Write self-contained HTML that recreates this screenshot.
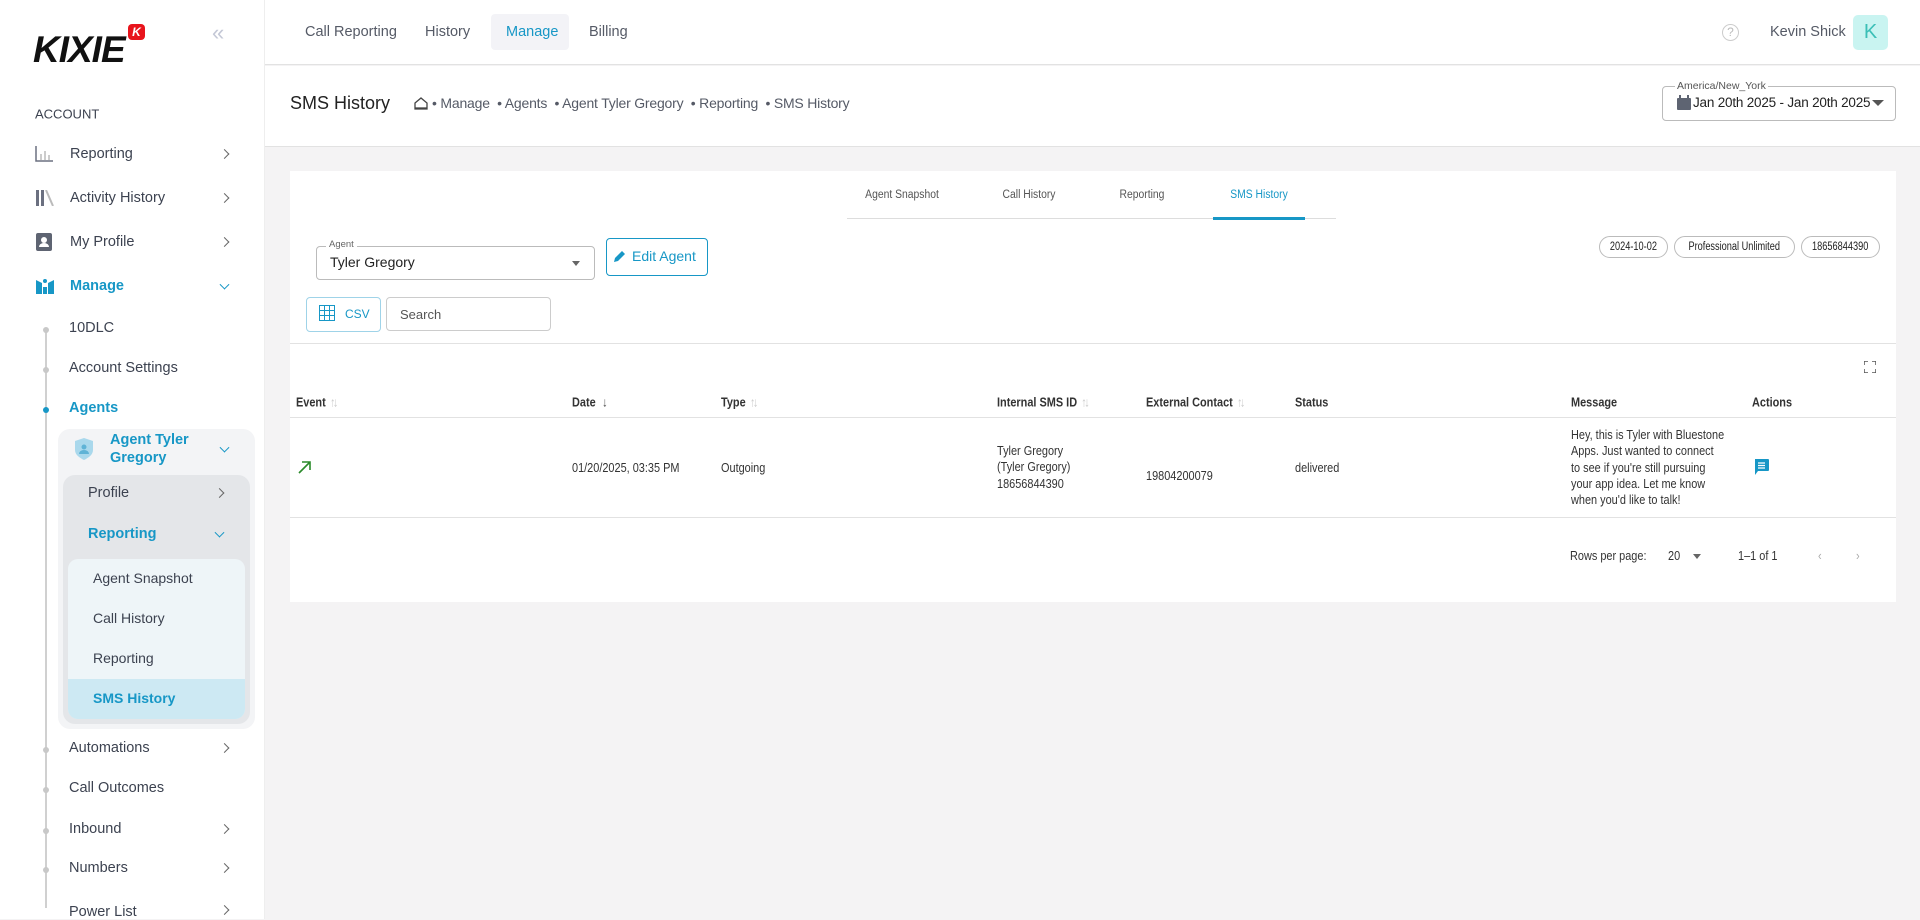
<!DOCTYPE html>
<html><head><meta charset="utf-8"><style>
*{box-sizing:border-box;margin:0;padding:0}
body{width:1920px;height:919px;overflow:hidden;background:#f4f3f4;font-family:"Liberation Sans",sans-serif;color:#3c4250;position:relative}
.a{position:absolute;white-space:nowrap}
.sb{position:absolute;left:0;top:0;width:265px;height:919px;background:#fff;border-right:1px solid #eee}
.si{position:absolute;font-size:14.5px;color:#3c4250;transform:translateY(-50%)}
.chev{position:absolute;left:221px;width:7px;height:7px;border-right:1.5px solid #666;border-bottom:1.5px solid #666;transform:translateY(-50%) rotate(-45deg)}
.chd{position:absolute;left:221px;width:7px;height:7px;border-right:1.5px solid #1797c6;border-bottom:1.5px solid #1797c6;transform:translateY(-70%) rotate(45deg)}
.dot{position:absolute;left:43px;width:6px;height:6px;border-radius:50%;background:#c8c8c8;transform:translateY(-50%)}
.blue{color:#1797c6;font-weight:bold}
.tn{position:absolute;top:32px;transform:translateY(-50%);font-size:14.5px;color:#555a66}
.th{position:absolute;top:402px;transform:translateY(-50%) scaleX(.84);transform-origin:left center;font-weight:bold;font-size:13px;color:#333}
.td{position:absolute;font-size:13px;color:#333;line-height:16.3px;transform:scaleX(.84);transform-origin:left top}
.sort{color:#ccc;font-weight:normal;margin-left:5px;letter-spacing:-3px}
.chip{position:absolute;top:236px;height:22px;border:1px solid #bbb;border-radius:11px;font-size:11.5px;line-height:20px;color:#222;text-align:center;overflow:hidden}
.chip span{display:inline-block;transform:scaleX(.8)}
.tab{position:absolute;top:195px;transform:translate(-50%,-50%) scaleX(.9);font-size:11.5px;color:#555}
</style></head><body>
<div class="sb">
 <div class="a" style="left:33px;top:29px;font-size:37px;font-weight:900;font-style:italic;color:#111;letter-spacing:-1px">KIXIE</div>
 <div class="a" style="left:128px;top:24px;width:17px;height:16px;background:#e8141c;border-radius:4px;color:#fff;font-size:12px;font-weight:bold;font-style:italic;text-align:center;line-height:16px">K</div>
 <div class="a" style="left:212px;top:20px;font-size:22px;color:#c4c8d6">«</div>
 <div class="si" style="left:35px;top:114px;font-size:13px">ACCOUNT</div>
 <svg class="a" style="left:35px;top:146px" width="18" height="16"><path d="M1 0V15H18" stroke="#6b7080" stroke-width="1.5" fill="none"/><rect x="5" y="8" width="2" height="6" fill="#ccc"/><rect x="9" y="5" width="2" height="9" fill="#ccc"/><rect x="13" y="9" width="2" height="5" fill="#ccc"/></svg>
 <div class="si" style="left:70px;top:154px">Reporting</div><div class="chev" style="top:154px"></div>
 <svg class="a" style="left:36px;top:190px" width="18" height="16"><rect x="0" y="0" width="3" height="16" fill="#6b7080"/><rect x="5" y="0" width="3" height="16" fill="#6b7080"/><path d="M10 0L17 16" stroke="#bbb" stroke-width="2"/></svg>
 <div class="si" style="left:70px;top:198px">Activity History</div><div class="chev" style="top:198px"></div>
 <svg class="a" style="left:36px;top:233px" width="18" height="18"><rect x="0" y="0" width="16" height="18" rx="2" fill="#5e6472"/><circle cx="8" cy="7" r="3" fill="#fff"/><path d="M3 14a5 4 0 0 1 10 0z" fill="#fff"/></svg>
 <div class="si" style="left:70px;top:242px">My Profile</div><div class="chev" style="top:242px"></div>
 <svg class="a" style="left:36px;top:278px" width="18" height="16"><path d="M0 2L6 5V16H0z M18 2L12 5V16H18z" fill="#1797c6"/><circle cx="9" cy="3" r="2" fill="#1797c6"/><rect x="7" y="9" width="4" height="7" fill="#1797c6"/></svg>
 <div class="si blue" style="left:70px;top:286px">Manage</div><div class="chd" style="top:286px"></div>
 <div class="a" style="left:45px;top:328px;width:1.5px;height:580px;background:#d0d0d0"></div>
 <div class="dot" style="top:330px"></div><div class="si" style="left:69px;top:328px">10DLC</div>
 <div class="dot" style="top:370px"></div><div class="si" style="left:69px;top:368px">Account Settings</div>
 <div class="dot" style="top:410px;background:#1797c6"></div><div class="si blue" style="left:69px;top:408px">Agents</div>
 <div class="a" style="left:58px;top:429px;width:197px;height:300px;background:#f3f4f6;border-radius:12px"></div>
 <svg class="a" style="left:75px;top:438px" width="18" height="22"><path d="M9 0L18 3V12C18 17 13 20 9 22C5 20 0 17 0 12V3z" fill="#a9d8ec"/><circle cx="9" cy="9" r="2.5" fill="#5fb3d6"/><path d="M4 16a5 4 0 0 1 10 0z" fill="#5fb3d6"/></svg>
 <div class="si blue" style="left:110px;top:440px">Agent Tyler</div>
 <div class="si blue" style="left:110px;top:458px">Gregory</div><div class="chd" style="top:449px"></div>
 <div class="a" style="left:63px;top:475px;width:187px;height:249px;background:#e4e6e9;border-radius:12px"></div>
 <div class="si" style="left:88px;top:493px">Profile</div><div class="chev" style="top:493px;left:216px"></div>
 <div class="si blue" style="left:88px;top:534px">Reporting</div><div class="chd" style="top:534px;left:216px"></div>
 <div class="a" style="left:68px;top:559px;width:177px;height:160px;background:#eef5f8;border-radius:10px;overflow:hidden"><div style="position:absolute;left:0;top:120px;width:177px;height:40px;background:#cde9f3"></div></div>
 <div class="si" style="left:93px;top:578px;font-size:14px">Agent Snapshot</div>
 <div class="si" style="left:93px;top:618px;font-size:14px">Call History</div>
 <div class="si" style="left:93px;top:658px;font-size:14px">Reporting</div>
 <div class="si blue" style="left:93px;top:698px;font-size:14px">SMS History</div>
 <div class="dot" style="top:750px"></div><div class="si" style="left:69px;top:748px">Automations</div><div class="chev" style="top:748px"></div>
 <div class="dot" style="top:790px"></div><div class="si" style="left:69px;top:788px">Call Outcomes</div>
 <div class="dot" style="top:831px"></div><div class="si" style="left:69px;top:829px">Inbound</div><div class="chev" style="top:829px"></div>
 <div class="dot" style="top:870px"></div><div class="si" style="left:69px;top:868px">Numbers</div><div class="chev" style="top:868px"></div>
 <div class="si" style="left:69px;top:912px">Power List</div><div class="chev" style="top:910px"></div>
</div>
<div class="a" style="left:265px;top:0;width:1655px;height:65px;background:#fff;border-bottom:1px solid #e2e2e2"></div>
<div class="a" style="left:491px;top:14px;width:78px;height:36px;background:#f3f3f7;border-radius:4px"></div>
<div class="tn" style="left:305px">Call Reporting</div>
<div class="tn" style="left:425px">History</div>
<div class="tn" style="left:506px;color:#1797c6">Manage</div>
<div class="tn" style="left:589px">Billing</div>
<div class="a" style="left:1722px;top:24px;width:17px;height:17px;border:1.5px solid #ccc;border-radius:50%;font-size:12px;color:#bbb;text-align:center;line-height:14px">?</div>
<div class="tn" style="left:1770px;color:#555a66">Kevin Shick</div>
<div class="a" style="left:1853px;top:15px;width:35px;height:35px;background:#c9f4f1;border-radius:5px;color:#3bbfb7;font-size:20px;text-align:center;line-height:35px">K</div>
<div class="a" style="left:265px;top:66px;width:1655px;height:81px;background:#fff;border-bottom:1px solid #e2e2e2"></div>
<div class="a" style="left:290px;top:93px;font-size:18px;color:#222">SMS History</div>
<svg class="a" style="left:414px;top:97px" width="14" height="13"><path d="M1 6L7 1L13 6V12H1z" stroke="#444" stroke-width="1.3" fill="none"/><path d="M1 11H13" stroke="#444" stroke-width="1.3"/></svg>
<div class="a" style="left:432px;top:95px;font-size:14px;color:#555a66;letter-spacing:-0.2px">• Manage &nbsp;• Agents &nbsp;• Agent Tyler Gregory &nbsp;• Reporting &nbsp;• SMS History</div>
<div class="a" style="left:1662px;top:86px;width:234px;height:35px;border:1px solid #bbb;border-radius:4px;background:#fff"></div>
<div class="a" style="left:1675px;top:80px;font-size:10.5px;color:#555;background:#fff;padding:0 2px">America/New_York</div>
<svg class="a" style="left:1677px;top:95px" width="14" height="15"><rect x="0" y="3" width="14" height="12" rx="1" fill="#5e6472"/><rect x="2" y="0" width="2" height="4" fill="#5e6472"/><rect x="10" y="0" width="2" height="4" fill="#5e6472"/></svg>
<div class="a" style="left:1693px;top:95px;font-size:13.5px;color:#222;letter-spacing:-0.2px">Jan 20th 2025 - Jan 20th 2025</div>
<div class="a" style="left:1872px;top:100px;border-left:6px solid transparent;border-right:6px solid transparent;border-top:6px solid #555"></div>
<div class="a" style="left:290px;top:171px;width:1606px;height:431px;background:#fff"></div>
<div class="tab" style="left:902px">Agent Snapshot</div>
<div class="tab" style="left:1029px">Call History</div>
<div class="tab" style="left:1142px">Reporting</div>
<div class="tab" style="left:1259px;color:#1797c6">SMS History</div>
<div class="a" style="left:847px;top:218px;width:489px;height:1px;background:#ddd"></div>
<div class="a" style="left:1213px;top:217px;width:92px;height:3px;background:#1797c6"></div>
<div class="a" style="left:316px;top:246px;width:279px;height:34px;border:1px solid #bbb;border-radius:4px"></div>
<div class="a" style="left:326px;top:239px;font-size:9.5px;color:#666;background:#fff;padding:0 3px">Agent</div>
<div class="a" style="left:330px;top:254px;font-size:14px;color:#222">Tyler Gregory</div>
<div class="a" style="left:572px;top:261px;border-left:4px solid transparent;border-right:4px solid transparent;border-top:5px solid #666"></div>
<div class="a" style="left:606px;top:238px;width:102px;height:38px;border:1px solid #1797c6;border-radius:4px"></div>
<svg class="a" style="left:614px;top:250px" width="12" height="12"><path d="M0 12L1 8L8 1L11 4L4 11z" fill="#1797c6"/></svg>
<div class="a" style="left:632px;top:248px;font-size:14px;color:#1797c6">Edit Agent</div>
<div class="chip" style="left:1599px;width:69px"><span>2024-10-02</span></div>
<div class="chip" style="left:1674px;width:121px"><span>Professional Unlimited</span></div>
<div class="chip" style="left:1801px;width:79px"><span>18656844390</span></div>
<div class="a" style="left:306px;top:297px;width:75px;height:35px;border:1px solid #9fd3e8;border-radius:4px"></div>
<svg class="a" style="left:319px;top:305px" width="16" height="16"><rect x="0.5" y="0.5" width="15" height="15" fill="none" stroke="#1797c6"/><path d="M5.5 0V16M10.5 0V16M0 5.5H16M0 10.5H16" stroke="#1797c6"/></svg>
<div class="a" style="left:345px;top:307px;font-size:12px;color:#1797c6">CSV</div>
<div class="a" style="left:386px;top:297px;width:165px;height:34px;border:1px solid #ccc;border-radius:4px"></div>
<div class="a" style="left:400px;top:307px;font-size:13px;color:#555">Search</div>
<div class="a" style="left:290px;top:343px;width:1606px;height:1px;background:#e2e2e2"></div>
<svg class="a" style="left:1864px;top:361px" width="12" height="12"><path d="M0 4V0H4M8 0H12V4M12 8V12H8M4 12H0V8" stroke="#555" stroke-width="1.5" fill="none"/></svg>
<div class="th" style="left:296px">Event<span class="sort">↑↓</span></div>
<div class="th" style="left:572px">Date <span style="font-weight:normal;color:#555;margin-left:4px">↓</span></div>
<div class="th" style="left:721px">Type<span class="sort">↑↓</span></div>
<div class="th" style="left:997px">Internal SMS ID<span class="sort">↑↓</span></div>
<div class="th" style="left:1146px">External Contact<span class="sort">↑↓</span></div>
<div class="th" style="left:1295px">Status</div>
<div class="th" style="left:1571px">Message</div>
<div class="th" style="left:1752px">Actions</div>
<div class="a" style="left:290px;top:417px;width:1606px;height:1px;background:#e2e2e2"></div>
<svg class="a" style="left:298px;top:461px" width="13" height="13"><path d="M1 12L12 1M4 1H12V9" stroke="#2a8a2a" stroke-width="1.6" fill="none"/></svg>
<div class="td" style="left:572px;top:460px">01/20/2025, 03:35 PM</div>
<div class="td" style="left:721px;top:460px">Outgoing</div>
<div class="td" style="left:997px;top:443px">Tyler Gregory<br>(Tyler Gregory)<br>18656844390</div>
<div class="td" style="left:1146px;top:468px">19804200079</div>
<div class="td" style="left:1295px;top:460px">delivered</div>
<div class="td" style="left:1571px;top:427px">Hey, this is Tyler with Bluestone<br>Apps. Just wanted to connect<br>to see if you're still pursuing<br>your app idea. Let me know<br>when you'd like to talk!</div>
<svg class="a" style="left:1754px;top:459px" width="15" height="16"><path d="M1 0H14A1 1 0 0 1 15 1V11A1 1 0 0 1 14 12H4L1 16z" fill="#1797c6"/><path d="M4 4H11M4 6.5H11M4 9H11" stroke="#fff" stroke-width="1.2"/></svg>
<div class="a" style="left:290px;top:517px;width:1606px;height:1px;background:#e2e2e2"></div>
<div class="td" style="left:1570px;top:548px">Rows per page:</div>
<div class="td" style="left:1668px;top:548px">20</div>
<div class="a" style="left:1693px;top:554px;border-left:4px solid transparent;border-right:4px solid transparent;border-top:5px solid #666"></div>
<div class="td" style="left:1738px;top:548px">1–1 of 1</div>
<div class="td" style="left:1818px;top:548px;color:#aaa">‹</div>
<div class="td" style="left:1856px;top:548px;color:#aaa">›</div>
</body></html>
